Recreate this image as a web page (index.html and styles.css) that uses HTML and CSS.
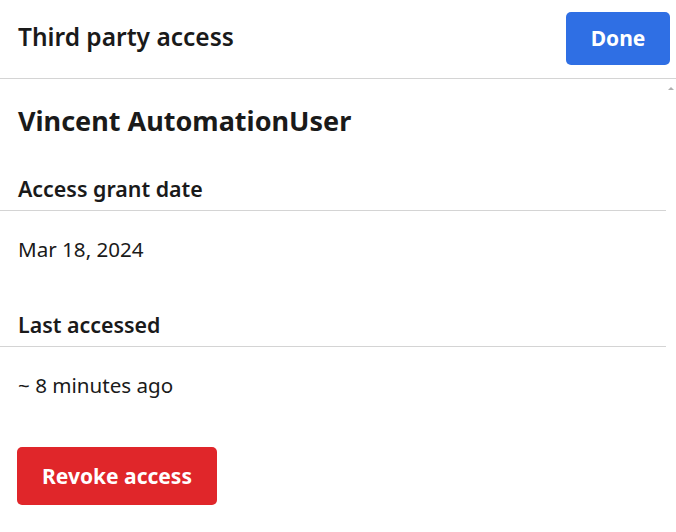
FILE: index.html
```html
<!DOCTYPE html>
<html lang="en">
<head>
    <meta charset="UTF-8">
    <meta name="viewport" content="width=device-width, initial-scale=1.0">
    <title>Third party access</title>
    <link rel="stylesheet" href="styles.css">
</head>
<body>
    <div class="header">
        <h2 class="header-title">Third party access</h2>
        <button class="btn btn-done">Done</button>
    </div>
    <div class="content-wrap">
        <div class="content">
            <h1 class="user-name">Vincent AutomationUser</h1>
            <div class="field">
                <div class="field-label">Access grant date</div>
                <div class="field-value">Mar 18, 2024</div>
            </div>
            <div class="field">
                <div class="field-label">Last accessed</div>
                <div class="field-value">~ 8 minutes ago</div>
            </div>
            <button class="btn btn-revoke">Revoke access</button>
        </div>
        <div class="scrollbar">
            <div class="scroll-arrow"></div>
        </div>
    </div>
</body>
</html>
```

FILE: styles.css
```css
body {
    margin: 0;
    font-family: "Noto Sans", "Open Sans", sans-serif;
    color: #1a1a1a;
    background: #fff;
}
.header {
    display: flex;
    align-items: center;
    justify-content: space-between;
    height: 78px;
    padding: 0 6px 0 18px;
    border-bottom: 1px solid #d4d4d4;
}
.header-title {
    margin: 0 0 4px;
    font-size: 24.5px;
    font-weight: 600;
    line-height: 34px;
}
.btn {
    font-family: inherit;
    font-weight: 700;
    color: #fff;
    border: none;
    border-radius: 5px;
    cursor: pointer;
}
.btn-done {
    width: 104px;
    height: 53px;
    margin-top: -2px;
    font-size: 21px;
    background: #2f6fe4;
}
.content-wrap {
    display: flex;
}
.content {
    width: 666px;
}
.scrollbar {
    flex: 1;
    padding-top: 8px;
    display: flex;
    justify-content: center;
}
.scroll-arrow {
    width: 0;
    height: 0;
    border-left: 3px solid transparent;
    border-right: 3px solid transparent;
    border-bottom: 3px solid #b0b0b0;
}
.user-name {
    margin: 0;
    padding: 24px 18px 0;
    font-size: 27px;
    font-weight: 700;
    line-height: 36px;
}
.field-label {
    margin-top: 36px;
    padding: 0 18px 7px;
    font-size: 21.4px;
    font-weight: 600;
    line-height: 28px;
    border-bottom: 1px solid #d4d4d4;
}
.field-value {
    padding: 23px 18px 0;
    font-size: 20.6px;
    line-height: 30px;
}
.field + .field .field-label {
    margin-top: 47px;
}
.btn-revoke {
    margin: 47px 0 0 17px;
    width: 200px;
    height: 58px;
    font-size: 21px;
    background: #e0262a;
}
```
